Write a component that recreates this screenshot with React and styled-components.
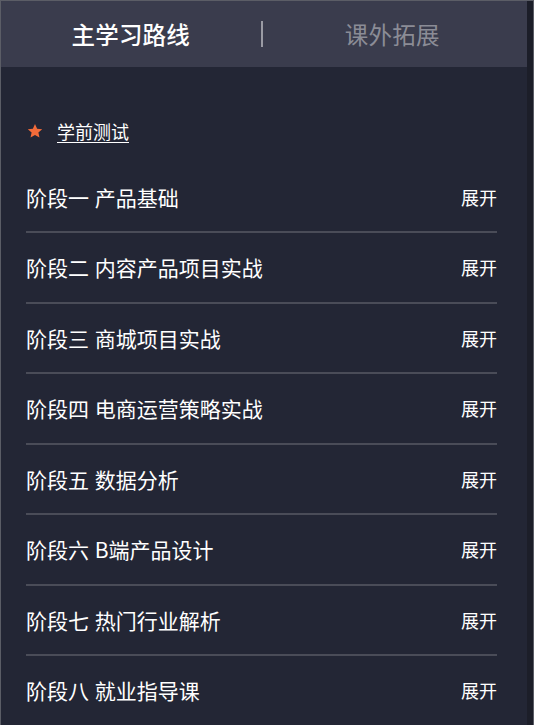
import React from 'react'
import styled, { createGlobalStyle } from 'styled-components'

const GlobalStyle = createGlobalStyle`
    html, body {
        margin: 0;
        padding: 0;
        background: #232635;
    }

    * {
        box-sizing: border-box;
        font-family: "Noto Sans CJK SC", "Noto Sans", sans-serif;
    }
`

const Frame = styled.div`
    width: 534px;
    height: 725px;
    display: flex;
    border: 1px solid #5b5d66;
    border-bottom: none;
    background: #232635;
    overflow: hidden;
`;

const Main = styled.div`
    flex: 1;
    display: flex;
    flex-direction: column;
`;

const Track = styled.div`
    width: 6px;
    background: #1c1e29;
`;

const Header = styled.div`
    height: 66px;
    flex-shrink: 0;
    display: flex;
    align-items: center;
    padding-right: 5px;
    background: #3a3c4d;
`;

const Tab = styled.div`
    flex: 1;
    text-align: center;
    font-size: 23.5px;
    font-weight: ${(p) => (p.active ? 500 : 400)};
    color: ${(p) => (p.active ? '#ffffff' : '#8b8c96')};
    letter-spacing: 0.2px;
`;

const Divider = styled.div`
    width: 2px;
    height: 26px;
    background: #9a9ba4;
`;

const Body = styled.div`
    padding: 0 30px 0 25px;
`;

const Pretest = styled.div`
    height: 95.5px;
    padding-top: 53px;
    display: flex;
    align-items: flex-start;
    gap: 14px;
`;

const PretestLink = styled.a`
    font-size: 18px;
    line-height: 22px;
    color: #ffffff;
    text-decoration: underline;
    text-underline-offset: 3px;
`;

const Star = styled.svg`
    width: 16px;
    height: 16px;
    margin: 3px 0 0 1px;
`;

const Stage = styled.div`
    height: 70.5px;
    display: flex;
    align-items: center;
    justify-content: space-between;
    border-bottom: 2px solid #4a4c58;
    color: #ffffff;
`;

const StageTitle = styled.span`
    font-size: 21px;
    word-spacing: 1px;
`;

const Toggle = styled.span`
    font-size: 18px;
`;

const stages = [
    '阶段一 产品基础',
    '阶段二 内容产品项目实战',
    '阶段三 商城项目实战',
    '阶段四 电商运营策略实战',
    '阶段五 数据分析',
    '阶段六 B端产品设计',
    '阶段七 热门行业解析',
    '阶段八 就业指导课',
];

export default function App()
{
    return <>
        <GlobalStyle />
        <Frame>
            <Main>
                <Header>
                    <Tab active>主学习路线</Tab>
                    <Divider />
                    <Tab>课外拓展</Tab>
                </Header>
                <Body>
                    <Pretest>
                        <Star viewBox="0 0 24 24">
                            <path fill="#f26b3a" d="M12 1.5l3.2 7 7.6.8-5.7 5.1 1.6 7.5L12 18l-6.7 3.9 1.6-7.5L1.2 9.3l7.6-.8z" />
                        </Star>
                        <PretestLink>学前测试</PretestLink>
                    </Pretest>
                    {stages.map((s) => (
                        <Stage key={s}>
                            <StageTitle>{s}</StageTitle>
                            <Toggle>展开</Toggle>
                        </Stage>
                    ))}
                </Body>
            </Main>
            <Track />
        </Frame>
    </>;
}
